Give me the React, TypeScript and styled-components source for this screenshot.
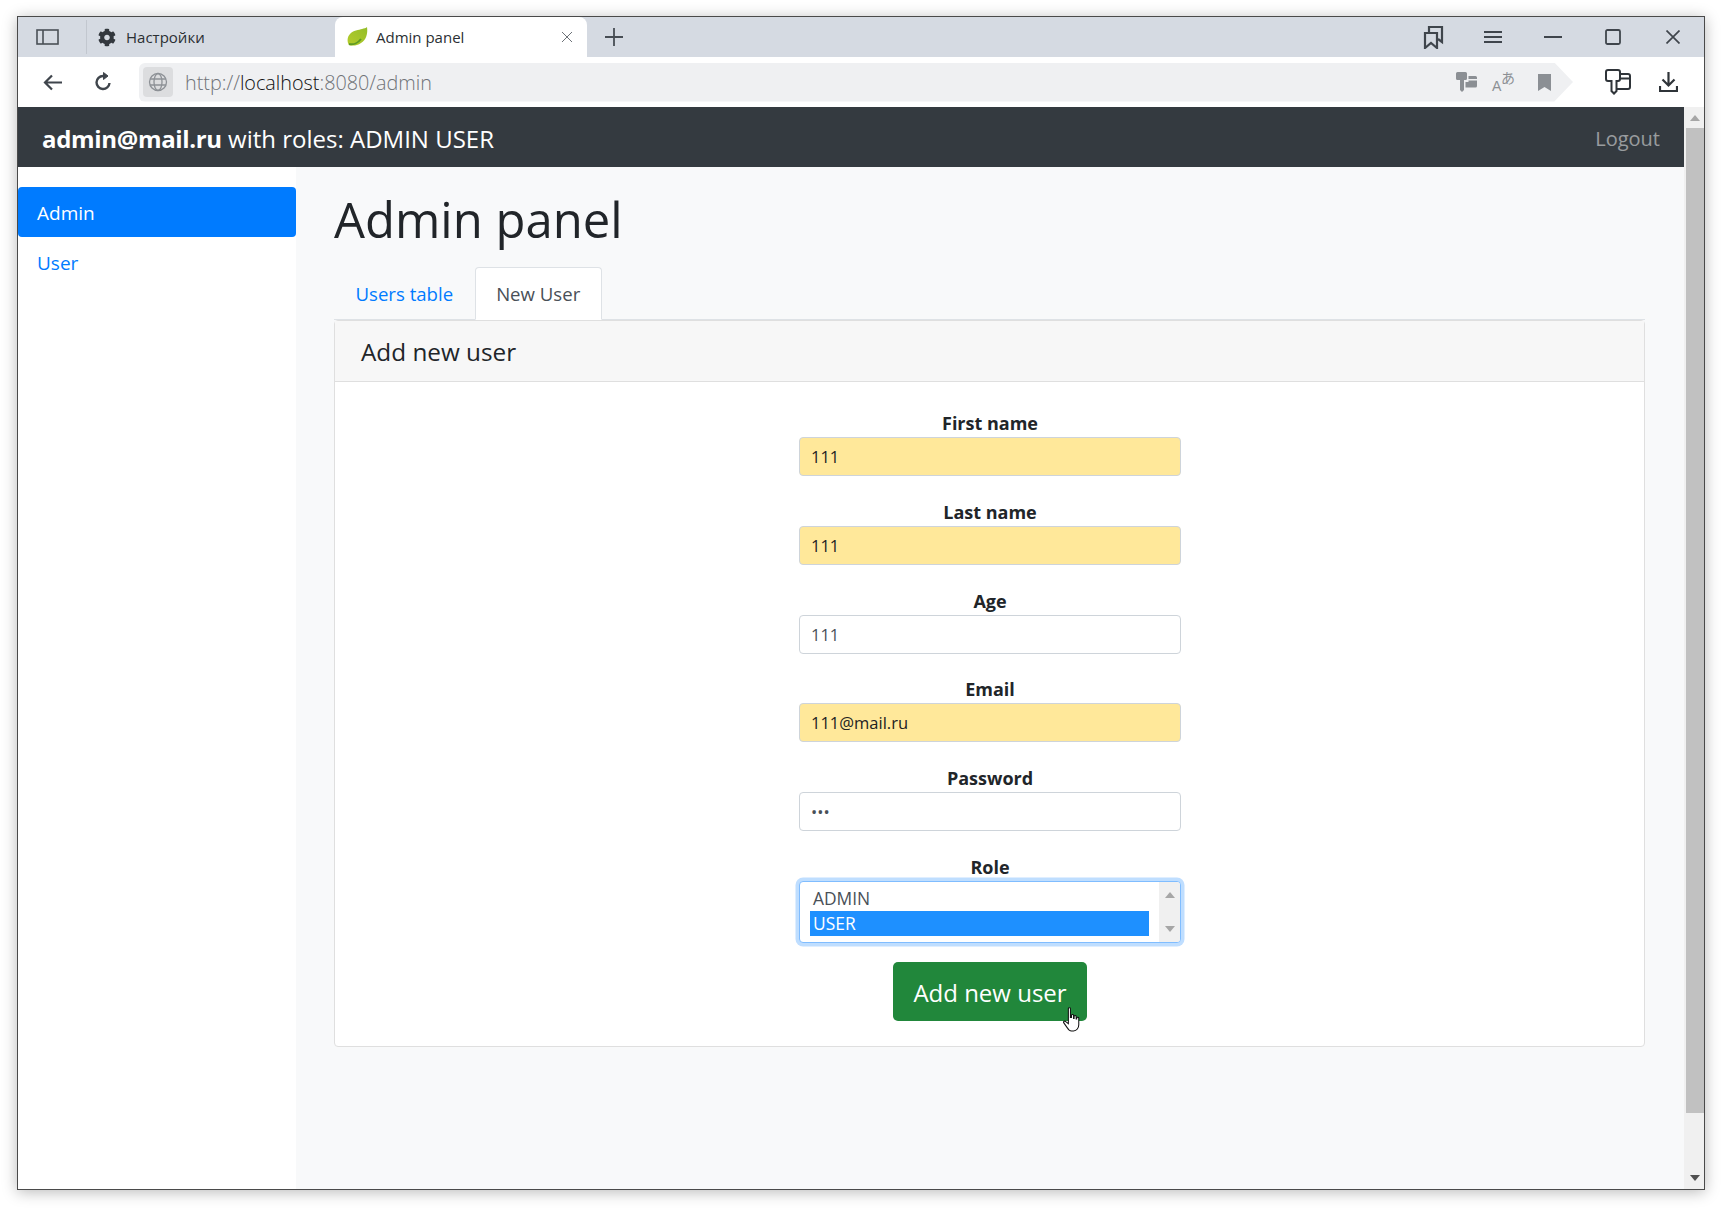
import React from "react";
import styled, { createGlobalStyle } from "styled-components";

const FONT = `"Open Sans", "Noto Sans", "Liberation Sans", sans-serif`;

const fields = [
  { label: "First name", value: "111", filled: true, type: "text" },
  { label: "Last name", value: "111", filled: true, type: "text" },
  { label: "Age", value: "111", filled: false, type: "text" },
  { label: "Email", value: "111@mail.ru", filled: true, type: "text" },
  { label: "Password", value: "111", filled: false, type: "password" },
];

const App = () => {
  return (
    <>
      <GlobalStyle />
      <Desktop>
        <BrowserWindow>
          <TabStrip>
            <SidebarToggle>
              <svg width="23" height="16" viewBox="0 0 23 16" fill="none" stroke="#4a5057" strokeWidth="1.6">
                <rect x="1" y="1" width="21" height="14" />
                <path d="M7 1v14" />
              </svg>
            </SidebarToggle>
            <TabDivider />
            <InactiveTab>
              <svg width="18" height="19" viewBox="0 0 512 512" fill="#33383e">
                <path d="M487 316l-43-25c4-23 4-47 0-70l43-25c5-3 7-9 6-14-11-36-31-69-56-96-4-4-10-5-15-2l-43 25c-18-15-39-27-61-35V24c0-6-4-10-9-11-37-8-75-8-110 0-5 1-9 5-9 11v50c-22 8-43 20-61 35L86 84c-5-3-11-2-15 2-25 27-45 60-56 96-2 5 1 11 6 14l43 25c-4 23-4 47 0 70l-43 25c-5 3-7 9-6 14 11 36 31 69 56 96 4 4 10 5 15 2l43-25c18 15 39 27 61 35v50c0 6 4 10 9 11 37 8 75 8 110 0 5-1 9-5 9-11v-50c22-8 43-20 61-35l43 25c5 3 11 2 15-2 25-27 45-60 56-96 2-5-1-11-6-14zM256 336c-44 0-80-36-80-80s36-80 80-80 80 36 80 80-36 80-80 80z" />
              </svg>
              <TabLabel>Настройки</TabLabel>
            </InactiveTab>
            <ActiveTab>
              <svg width="21" height="20" viewBox="0 0 21 20">
                <defs>
                  <linearGradient id="leaf" x1="0" y1="1" x2="1" y2="0">
                    <stop offset="0" stopColor="#b5cc2a" />
                    <stop offset="1" stopColor="#93bd2a" />
                  </linearGradient>
                </defs>
                <path d="M20 0c1 7-1 13-6 16-4 3-9 3-12 2-2-3-2-8 1-11 3-4 9-4 12-5 2-.5 4-1 5-2z" fill="url(#leaf)" />
                <path d="M2 17c4 1 9-1 12-5" fill="none" stroke="#5d9a24" strokeWidth="2" />
              </svg>
              <TabLabel>Admin panel</TabLabel>
              <TabClose>
                <svg width="12" height="12" viewBox="0 0 12 12" stroke="#6d7278" strokeWidth="1" fill="none">
                  <path d="M1 1l10 10M11 1L1 11" />
                </svg>
              </TabClose>
            </ActiveTab>
            <NewTab>
              <svg width="20" height="20" viewBox="0 0 20 20" stroke="#474d54" strokeWidth="1.8" fill="none">
                <path d="M10 1v18M1 10h18" />
              </svg>
            </NewTab>
            <StripRight>
              <StripButton>
                <svg width="21" height="24" viewBox="0 0 21 24" fill="none" stroke="#3f454c" strokeWidth="2.2">
                  <path d="M2 23V8h12v15l-6-5z" />
                  <path d="M6 7V2h13v15l-4-3" />
                </svg>
              </StripButton>
              <StripButton>
                <svg width="18" height="14" viewBox="0 0 18 14" stroke="#3f454c" strokeWidth="1.8">
                  <path d="M0 2h18M0 7h18M0 12h18" />
                </svg>
              </StripButton>
              <StripButton>
                <svg width="18" height="4" viewBox="0 0 18 4" stroke="#3f454c" strokeWidth="2">
                  <path d="M0 2h18" />
                </svg>
              </StripButton>
              <StripButton>
                <svg width="16" height="16" viewBox="0 0 16 16" fill="none" stroke="#3f454c" strokeWidth="1.8">
                  <rect x="1" y="1" width="14" height="14" rx="1.5" />
                </svg>
              </StripButton>
              <StripButton>
                <svg width="14" height="14" viewBox="0 0 14 14" fill="none" stroke="#3f454c" strokeWidth="1.7">
                  <path d="M0.5 0.5l13 13M13.5 0.5l-13 13" />
                </svg>
              </StripButton>
            </StripRight>
          </TabStrip>

          <AddressRow>
            <BackButton>
              <svg width="19" height="17" viewBox="0 0 19 17" fill="none" stroke="#3f454c" strokeWidth="2.2">
                <path d="M19 8.5H2M9 1.5l-7 7 7 7" />
              </svg>
            </BackButton>
            <ReloadButton>
              <svg width="17" height="20" viewBox="0 0 17 20" fill="none" stroke="#3f454c" strokeWidth="2.4">
                <path d="M14.5 11a6.500 6.500 0 1 1-6.500-7h3" />
                <path d="M8.500 0.500l4.500 3.500-4.500 3.500z" fill="#3f454c" strokeWidth="1" />
              </svg>
            </ReloadButton>
            <AddressBar>
              <SecurityBadge>
                <svg width="20" height="20" viewBox="0 0 20 20" fill="none" stroke="#8d9196" strokeWidth="1.3">
                  <circle cx="10" cy="10" r="8.5" />
                  <ellipse cx="10" cy="10" rx="4" ry="8.5" />
                  <path d="M2 7h16M2 13h16" />
                </svg>
              </SecurityBadge>
              <Url>
                http://<UrlHost>localhost</UrlHost>:8080/admin
              </Url>
              <AddressIcons>
                <svg width="21" height="20" viewBox="0 0 21 20" fill="#8b8f94">
                  <path d="M1.500 0h8a1.500 1.500 0 0 1 1.500 1.500v5a1.500 1.500 0 0 1-1.500 1.500H8v10l-2 2-2-2V8H1.500A1.500 1.500 0 0 1 0 6.500v-5A1.500 1.500 0 0 1 1.500 0z" />
                  <path d="M12.500 4h7a1.500 1.500 0 0 1 1.500 1.500V7h-8.500zM12.500 8.500H21V14a1.500 1.500 0 0 1-1.500 1.500H9.500V10h3z" />
                </svg>
                <TranslateIcon>
                  <svg width="24" height="20" viewBox="0 0 24 20" overflow="visible">
                    <text x="0" y="19" fontFamily="Liberation Sans, sans-serif" fontSize="14" fill="#8b8f94">A</text>
                    <text x="9" y="11" fontFamily="Noto Sans CJK JP, sans-serif" fontSize="14" fill="#8b8f94">あ</text>
                  </svg>
                </TranslateIcon>
                <BookmarkIcon>
                  <svg width="13" height="17" viewBox="0 0 13 17" fill="#8b8f94">
                    <path d="M0 0h13v17l-6.500-4L0 17z" />
                  </svg>
                </BookmarkIcon>
              </AddressIcons>
            </AddressBar>
            <KeyButton>
              <svg width="26" height="26" viewBox="0 0 26 26" fill="none" stroke="#2f3439" strokeWidth="2">
                <path d="M3 1h10a2 2 0 0 1 2 2v7a2 2 0 0 1-2 2h-1.500v10l-2.500 2.500-2.500-2.500V12H3a2 2 0 0 1-2-2V3a2 2 0 0 1 2-2z" />
                <path d="M15 5h8a2 2 0 0 1 2 2v11a2 2 0 0 1-2 2H11.500M15 9.500h10" />
              </svg>
            </KeyButton>
            <DownloadButton>
              <svg width="19" height="20" viewBox="0 0 19 20" fill="none" stroke="#2f3439" strokeWidth="2.2">
                <path d="M9.500 0v13M3.500 7.500l6 6 6-6M1 14v5h17v-5" />
              </svg>
            </DownloadButton>
          </AddressRow>

          <Viewport>
            <Site>
              <Navbar>
                <NavTitle>
                  <NavEmail>admin@mail.ru</NavEmail> with roles: ADMIN USER
                </NavTitle>
                <Logout>Logout</Logout>
              </Navbar>
              <SiteBody>
                <Sidebar>
                  <SideLink $active>Admin</SideLink>
                  <SideLink>User</SideLink>
                </Sidebar>
                <Main>
                  <Heading>Admin panel</Heading>
                  <Tabs>
                    <TabLink>Users table</TabLink>
                    <TabLink $active>New User</TabLink>
                  </Tabs>
                  <Card>
                    <CardHeader>Add new user</CardHeader>
                    <CardBody>
                      <Form>
                        {fields.map((f) => (
                          <Field key={f.label}>
                            <FieldLabel>{f.label}</FieldLabel>
                            <TextInput
                              $filled={f.filled}
                              type={f.type}
                              defaultValue={f.value}
                              readOnly
                            />
                          </Field>
                        ))}
                        <Field>
                          <FieldLabel>Role</FieldLabel>
                          <ListBox>
                            <Options>
                              <RoleOption>ADMIN</RoleOption>
                              <RoleOption $selected>USER</RoleOption>
                            </Options>
                            <ListScroll>
                              <ArrowUp $color="#a6a6a6" />
                              <ArrowDown $color="#a6a6a6" />
                            </ListScroll>
                          </ListBox>
                        </Field>
                        <SubmitButton type="button">
                          Add new user
                          <Cursor>
                            <svg width="18" height="25" viewBox="0 0 17 24" fill="#fff" stroke="#111" strokeWidth="1">
                              <path d="M5 1.500c0-1 2-1 2 0V10l1 0V8c0-1 2-1 2 0v3h.5V9c0-1 2-1 2 0v2.500h.5V10.500c0-1 2-1 2 0V17c0 3-2 6-5 6H8c-2 0-3-1-4-3l-3.500-5c-.5-1 1-2 2-1L5 16z" />
                            </svg>
                          </Cursor>
                        </SubmitButton>
                      </Form>
                    </CardBody>
                  </Card>
                </Main>
              </SiteBody>
            </Site>
            <PageScroll>
              <ArrowUp $color="#a6a6a6" />
              <ScrollThumb />
              <ArrowDown $color="#505050" />
            </PageScroll>
          </Viewport>
        </BrowserWindow>
      </Desktop>
    </>
  );
};

export default App;

const GlobalStyle = createGlobalStyle`
  html, body {
    margin: 0;
    padding: 0;
    background: #fff;
    font-family: ${FONT};
  }
  * {
    box-sizing: border-box;
  }
`;

const Desktop = styled.div`
  width: 1725px;
  height: 1210px;
  padding: 16px 20px 20px 17px;
  background: #fff;
`;

const BrowserWindow = styled.div`
  width: 100%;
  height: 1174px;
  display: flex;
  flex-direction: column;
  border: 1px solid #4a4a4a;
  box-shadow: 0 2px 14px rgba(0, 0, 0, 0.28);
  background: #fff;
  overflow: hidden;
`;

const TabStrip = styled.div`
  height: 40px;
  flex: none;
  display: flex;
  align-items: center;
  background: #d5dae2;
  color: #24292e;
`;

const SidebarToggle = styled.div`
  width: 68px;
  display: flex;
  justify-content: center;
  padding-right: 9px;
`;

const TabDivider = styled.div`
  width: 1px;
  height: 34px;
  background: #c2c7cf;
`;

const InactiveTab = styled.div`
  width: 248px;
  height: 100%;
  display: flex;
  align-items: center;
  gap: 10px;
  padding-left: 11px;
`;

const ActiveTab = styled.div`
  width: 252px;
  height: 100%;
  display: flex;
  align-items: center;
  gap: 8px;
  padding: 0 14px 0 12px;
  background: #fff;
  border-radius: 8px 8px 0 0;
`;

const TabLabel = styled.span`
  font-size: 15px;
  color: #2b2f33;
  white-space: nowrap;
`;

const TabClose = styled.span`
  margin-left: auto;
  display: flex;
`;

const NewTab = styled.div`
  margin-left: 17px;
  display: flex;
`;

const StripRight = styled.div`
  margin-left: auto;
  display: flex;
  align-items: center;
  padding-right: 1px;
`;

const StripButton = styled.div`
  width: 60px;
  display: flex;
  justify-content: center;
`;

const AddressRow = styled.div`
  height: 50px;
  flex: none;
  display: flex;
  align-items: center;
  background: #fff;
`;

const BackButton = styled.div`
  width: 52px;
  margin-left: 8px;
  display: flex;
  justify-content: center;
`;

const ReloadButton = styled.div`
  width: 50px;
  display: flex;
  justify-content: center;
`;

const AddressBar = styled.div`
  width: 1434px;
  height: 39px;
  margin-left: 11px;
  display: flex;
  align-items: center;
  padding-left: 4px;
  background: #eff0f2;
  border-radius: 6px 0 0 6px;
  clip-path: polygon(0 0, 98.7% 0, 100% 50%, 98.7% 100%, 0 100%);
`;

const SecurityBadge = styled.div`
  width: 30px;
  height: 30px;
  display: flex;
  align-items: center;
  justify-content: center;
  background: #dcdddf;
  border-radius: 4px;
`;

const Url = styled.div`
  margin-left: 12px;
  padding-top: 1px;
  font-size: 19.800px;
  font-weight: 300;
  color: #6f7378;
`;

const UrlHost = styled.span`
  color: #111;
`;

const AddressIcons = styled.div`
  margin-left: auto;
  padding-right: 22px;
  display: flex;
  align-items: center;
`;

const TranslateIcon = styled.div`
  margin-left: 15px;
  display: flex;
`;

const BookmarkIcon = styled.div`
  margin-left: 22px;
  display: flex;
`;

const KeyButton = styled.div`
  width: 51px;
  margin-left: 19px;
  display: flex;
  justify-content: center;
`;

const DownloadButton = styled.div`
  width: 51px;
  display: flex;
  justify-content: center;
`;

const Viewport = styled.div`
  flex: 1;
  min-height: 0;
  display: flex;
`;

const Site = styled.div`
  flex: 1;
  display: flex;
  flex-direction: column;
  min-width: 0;
`;

const Navbar = styled.div`
  height: 60px;
  flex: none;
  display: flex;
  align-items: center;
  justify-content: space-between;
  padding: 0 24px;
  background: #343a40;
`;

const NavTitle = styled.div`
  padding-top: 2px;
  font-size: 24px;
  color: #fff;
`;

const NavEmail = styled.b`
  letter-spacing: -0.33px;
`;

const Logout = styled.div`
  padding-top: 2px;
  font-size: 20px;
  color: rgba(255, 255, 255, 0.5);
`;

const SiteBody = styled.div`
  flex: 1;
  display: flex;
`;

const Sidebar = styled.div`
  width: 278px;
  padding-top: 20px;
  background: #fff;
`;

const SideLink = styled.div<{ $active?: boolean }>`
  height: 50px;
  display: flex;
  align-items: center;
  padding: 2px 0 0 19px;
  font-size: 19px;
  border-radius: 4px;
  color: ${(p) => (p.$active ? "#fff" : "#007bff")};
  background: ${(p) => (p.$active ? "#007bff" : "transparent")};
`;

const Main = styled.div`
  flex: 1;
  display: flex;
  flex-direction: column;
  padding: 20px 39px 0 38px;
  background: #f8f9fa;
`;

const Heading = styled.h1`
  margin: 0;
  height: 80px;
  line-height: 64px;
  font-size: 49px;
  font-weight: 500;
  color: #212529;
`;

const Tabs = styled.div`
  display: flex;
  height: 53px;
  border-bottom: 1px solid #dee2e6;
`;

const TabLink = styled.div<{ $active?: boolean }>`
  display: flex;
  align-items: center;
  padding: 0 20.500px;
  font-size: 18.600px;
  height: 53px;
  border-radius: 4px 4px 0 0;
  border: 1px solid ${(p) => (p.$active ? "#dee2e6" : "transparent")};
  border-bottom-color: ${(p) => (p.$active ? "#fff" : "transparent")};
  background: ${(p) => (p.$active ? "#fff" : "transparent")};
  color: ${(p) => (p.$active ? "#495057" : "#007bff")};
`;

const Card = styled.div`
  height: 727px;
  display: flex;
  flex-direction: column;
  border: 1px solid #dfdfdf;
  border-radius: 4px;
  background: #fff;
`;

const CardHeader = styled.div`
  height: 61px;
  flex: none;
  display: flex;
  align-items: center;
  padding-left: 26px;
  font-size: 24.300px;
  color: #212529;
  background: #f7f7f7;
  border-bottom: 1px solid #dfdfdf;
`;

const CardBody = styled.div`
  flex: 1;
  padding-top: 30px;
`;

const Form = styled.div`
  width: 382px;
  margin-left: 464px;
  display: flex;
  flex-direction: column;
  align-items: center;
`;

const Field = styled.div`
  width: 100%;
  height: 88.800px;
  display: flex;
  flex-direction: column;
  align-items: center;
`;

const FieldLabel = styled.div`
  height: 25px;
  line-height: 22px;
  font-size: 18px;
  font-weight: 700;
  color: #212529;
`;

const TextInput = styled.input<{ $filled?: boolean }>`
  width: 100%;
  height: 39px;
  padding: 0 11px;
  border: 1px solid #ced4da;
  border-radius: 4px;
  outline: none;
  font-family: ${FONT};
  font-size: 16.500px;
  color: ${(p) => (p.$filled ? "#222" : "#495057")};
  background: ${(p) => (p.$filled ? "#ffe89a" : "#fff")};
`;

const ListBox = styled.div`
  width: 100%;
  height: 62px;
  flex: none;
  display: flex;
  border: 1px solid #80bdff;
  border-radius: 4px;
  box-shadow: 0 0 0 3.500px rgba(0, 123, 255, 0.25);
  background: #fff;
  overflow: hidden;
`;

const Options = styled.div`
  flex: 1;
  padding: 4px 10px 0;
`;

const RoleOption = styled.div<{ $selected?: boolean }>`
  height: 25px;
  line-height: 25px;
  padding-left: 3px;
  font-size: 17.400px;
  color: ${(p) => (p.$selected ? "#fff" : "#495057")};
  background: ${(p) => (p.$selected ? "#1e90ff" : "transparent")};
`;

const ListScroll = styled.div`
  width: 21px;
  display: flex;
  flex-direction: column;
  align-items: center;
  justify-content: space-between;
  padding: 10px 0;
  background: #f0f0f0;
`;

const ArrowUp = styled.div<{ $color: string }>`
  width: 0;
  height: 0;
  flex: none;
  border-left: 5px solid transparent;
  border-right: 5px solid transparent;
  border-bottom: 6px solid ${(p) => p.$color};
`;

const ArrowDown = styled.div<{ $color: string }>`
  width: 0;
  height: 0;
  flex: none;
  border-left: 5px solid transparent;
  border-right: 5px solid transparent;
  border-top: 6px solid ${(p) => p.$color};
`;

const SubmitButton = styled.button`
  position: relative;
  width: 194px;
  height: 59px;
  margin-top: 17px;
  padding: 2px 0 0;
  border: none;
  border-radius: 5px;
  font-family: ${FONT};
  font-size: 24px;
  color: #fff;
  background: #21873b;
`;

const Cursor = styled.span`
  position: absolute;
  left: 170px;
  top: 45px;
  display: flex;
`;

const PageScroll = styled.div`
  width: 20px;
  flex: none;
  display: flex;
  flex-direction: column;
  align-items: center;
  padding: 8px 0 8px 2px;
  background: #f0f0f0;
`;

const ScrollThumb = styled.div`
  width: 100%;
  height: 985px;
  margin: 7px 0 auto;
  background: #c1c1c1;
`;
